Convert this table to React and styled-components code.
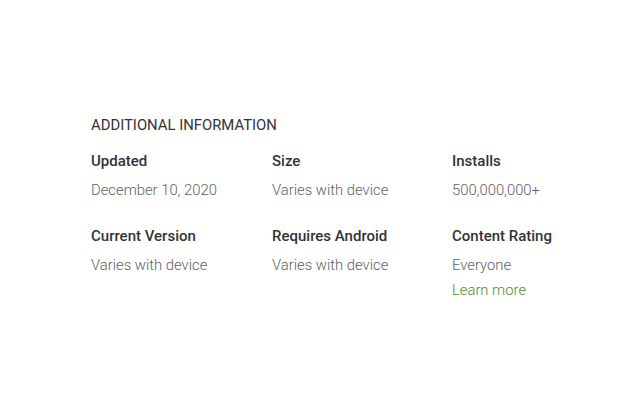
import React from "react";
import styled, { createGlobalStyle } from "styled-components";

const Global = createGlobalStyle`
  html, body { margin: 0; padding: 0; background: #fff; }
  body { font-family: Roboto, "Noto Sans", Arial, sans-serif; }
`;

const Page = styled.div`
  width: 640px;
  height: 400px;
  box-sizing: border-box;
  padding: 115px 0 0 91px;
`;

const Title = styled.h2`
  margin: 0 0 16px;
  font-size: 14.85px;
  line-height: 20px;
  font-weight: 400;
  color: #333;
  text-transform: uppercase;
`;

const Grid = styled.div`
  display: grid;
  grid-template-columns: 181px 180px 180px;
  row-gap: 24px;
`;

const Item = styled.div`
  display: flex;
  flex-direction: column;
`;

const Label = styled.div`
  font-size: 15px;
  line-height: 20px;
  font-weight: 500;
  color: #333;
  margin-bottom: 7px;
`;

const Value = styled.div`
  font-size: 14.8px;
  line-height: 24px;
  font-weight: 300;
  color: #616161;
`;

const Link = styled.a`
  font-size: 14.8px;
  line-height: 26px;
  font-weight: 300;
  color: #558b2f;
  text-decoration: none;
`;

const items = [
  { label: "Updated", value: "December 10, 2020" },
  { label: "Size", value: "Varies with device" },
  { label: "Installs", value: "500,000,000+" },
  { label: "Current Version", value: "Varies with device" },
  { label: "Requires Android", value: "Varies with device" },
  { label: "Content Rating", value: "Everyone", link: "Learn more" },
];

export default function App() {
  return (
    <Page>
      <Global />
      <Title>Additional Information</Title>
      <Grid>
        {items.map((it) => (
          <Item key={it.label}>
            <Label>{it.label}</Label>
            <Value>{it.value}</Value>
            {it.link && <Link href="#">{it.link}</Link>}
          </Item>
        ))}
      </Grid>
    </Page>
  );
}
